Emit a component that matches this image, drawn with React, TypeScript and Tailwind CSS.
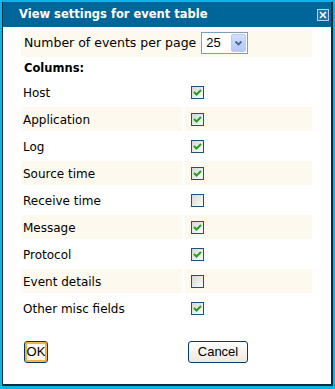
import React from 'react';

type Row = { label: string; checked: boolean };

const rows: Row[] = [
  { label: 'Host', checked: true },
  { label: 'Application', checked: true },
  { label: 'Log', checked: true },
  { label: 'Source time', checked: true },
  { label: 'Receive time', checked: false },
  { label: 'Message', checked: true },
  { label: 'Protocol', checked: true },
  { label: 'Event details', checked: false },
  { label: 'Other misc fields', checked: true },
];

function CheckBox({ checked }: { checked: boolean }) {
  return (
    <div className="ml-[6px] h-[13px] w-[13px] border border-[#1c5180] bg-gradient-to-br from-[#d8d8d2] to-[#fbfbf9]">
      {checked && (
        <svg width="11" height="11" viewBox="0 0 11 11" className="block">
          <path d="M2 5 L4.5 7.5 L9 3" fill="none" stroke="#21a121" strokeWidth="2" />
        </svg>
      )}
    </div>
  );
}

export default function App() {
  return (
    <div className="h-[389px] w-[335px] bg-[#0bb5ea] pb-[3px] pl-[2px] pr-[2px] pt-[2px]">
      <div className="flex h-full flex-col border-b-2 border-l border-r-2 border-[#082c44] bg-white">
        {/* title bar */}
        <div className="flex h-[25px] items-center justify-between bg-[#006699] pl-[16px] pr-[2px]">
          <span className="font-['DejaVu_Sans',sans-serif] text-[11.5px] font-bold text-white">
            View settings for event table
          </span>
          <div className="flex h-[12px] w-[12px] items-center justify-center border border-[#b9d4ea] bg-[#1a77a8]">
            <svg width="8" height="8" viewBox="0 0 8 8" className="block">
              <path d="M1 1 L7 7 M7 1 L1 7" stroke="#ffffff" strokeWidth="1.6" />
            </svg>
          </div>
        </div>

        {/* body */}
        <div className="flex-1 pl-[18px] pr-[19px] pt-[2px] font-['DejaVu_Sans',sans-serif] text-[12px] text-black">
          <div className="grid grid-cols-[161px_127px] gap-[3px]">
            <div className="col-span-2 flex h-[28px] items-center bg-[#fdf9ee] pl-[3px]">
              <span className="text-[12.5px]">Number of events per page</span>
              <div className="ml-[5px] flex h-[22px] w-[47px] items-center border border-[#7f9db9] bg-white pl-[4px] pr-[1px]">
                <span className="flex-1 font-['Liberation_Sans',sans-serif] text-[13px]">25</span>
                <div className="flex h-[18px] w-[15px] items-center justify-center rounded-[2px] border border-[#b7cbf5] bg-gradient-to-b from-[#d3e0fd] to-[#b3c8f6]">
                  <svg width="7" height="5" viewBox="0 0 7 5" className="block">
                    <path d="M0.5 0.5 L3.5 3.5 L6.5 0.5" fill="none" stroke="#4d6185" strokeWidth="1.8" />
                  </svg>
                </div>
              </div>
            </div>
            <div className="col-span-2 flex h-[17px] items-center pl-[3px] text-[11.5px] font-bold">
              Columns:
            </div>
            {rows.map((r, i) => {
              const bg = i % 2 === 1 ? 'bg-[#fdf9ee]' : '';
              return (
                <React.Fragment key={r.label}>
                  <div className={`flex h-[24px] items-center pl-[2px] pt-px ${bg}`}>{r.label}</div>
                  <div className={`flex h-[24px] items-center ${bg}`}>
                    <CheckBox checked={r.checked} />
                  </div>
                </React.Fragment>
              );
            })}
          </div>

          <div className="mt-[21px] grid grid-cols-[161px_127px] gap-[3px] font-['Liberation_Sans',sans-serif] text-[13px]">
            <div className="pl-[3px]">
              <button className="flex h-[22px] w-[24px] items-center justify-center rounded-[3px] border border-[#003c74] bg-[#fffbf2] shadow-[inset_0_0_0_2px_#f5b33a]">
                OK
              </button>
            </div>
            <div className="pl-[3px]">
              <button className="flex h-[22px] w-[60px] items-center justify-center rounded-[3px] border border-[#003c74] bg-gradient-to-b from-[#ffffff] to-[#ece9df]">
                Cancel
              </button>
            </div>
          </div>
        </div>
      </div>
    </div>
  );
}
